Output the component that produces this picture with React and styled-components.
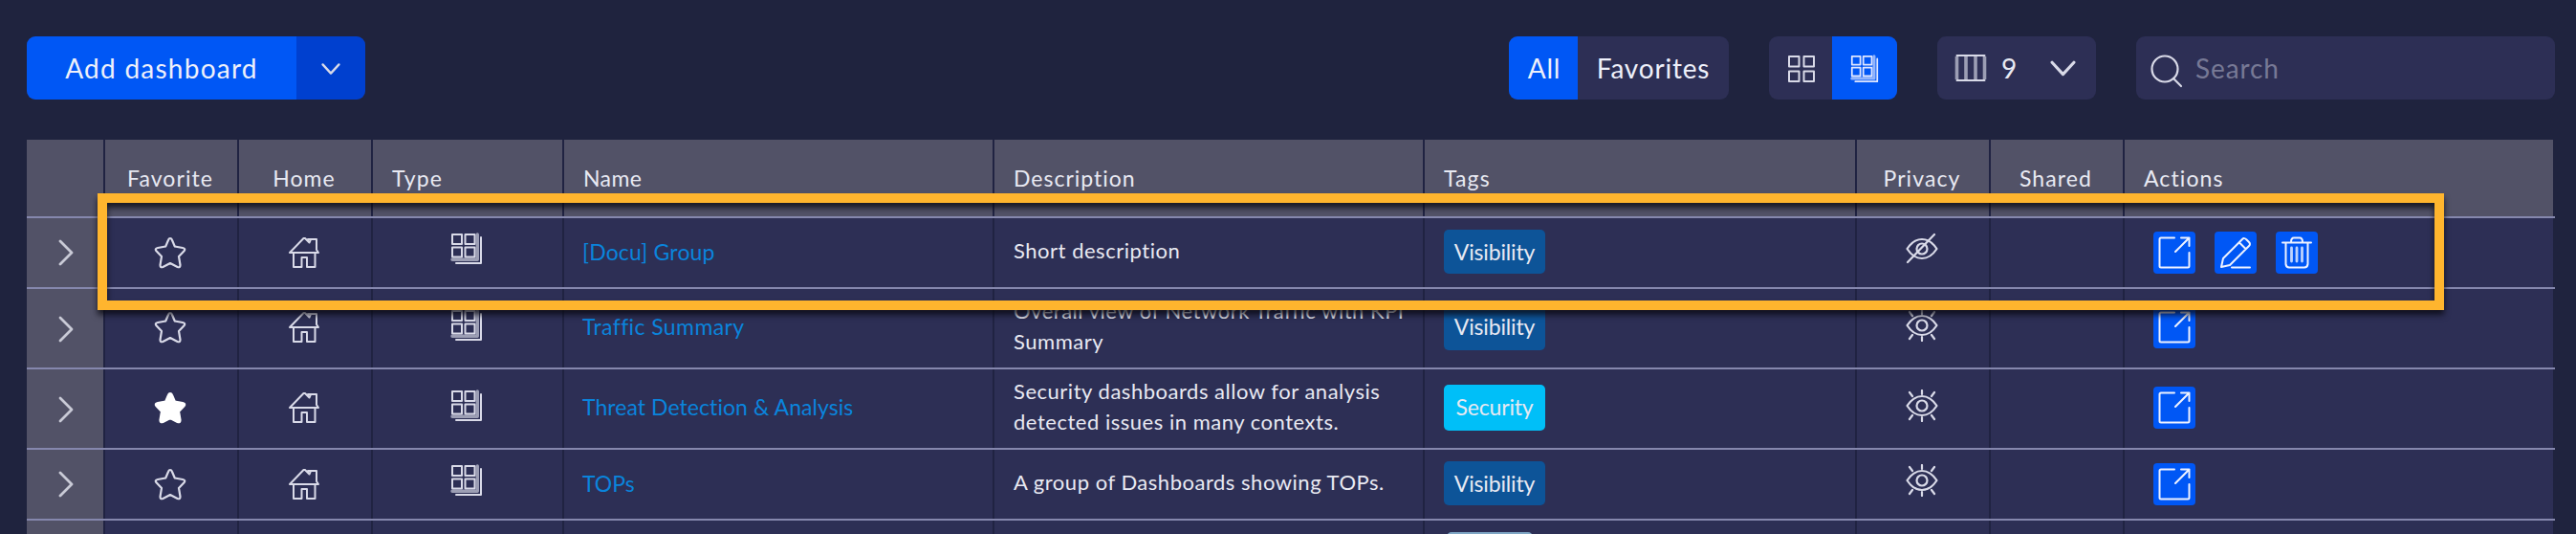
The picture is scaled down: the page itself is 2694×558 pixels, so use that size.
import React from "react";
import styled, { createGlobalStyle } from "styled-components";

const Global = createGlobalStyle`
  * { box-sizing: border-box; }
  html, body { margin: 0; background: #1f233e; }
  body { height: 558px; overflow: hidden; font-family: Lato, "Liberation Sans", sans-serif; color: #e8e9f2; }
`;

const Page = styled.div`
  position: relative;
  width: 2694px;
  height: 558px;
  overflow: hidden;
  padding: 38px 22px 0 28px;
`;
const Toolbar = styled.div`
  display: flex;
  height: 66px;
  margin-bottom: 42px;
`;
const Group = styled.div`
  display: flex;
  height: 66px;
  width: ${(p) => p.$w}px;
  margin-left: ${(p) => p.$gap || 0}px;
  background: #2d2f55;
  border-radius: 9px;
  overflow: hidden;
`;
const Segment = styled.button`
  display: flex;
  align-items: center;
  justify-content: center;
  width: ${(p) => p.$w}px;
  height: 66px;
  padding: ${(p) => p.$top || 0}px 0 0 ${(p) => p.$left || 0}px;
  border: 0;
  font: inherit;
  font-size: 28px;
  line-height: 34px;
  letter-spacing: ${(p) => p.$ls || 0}px;
  color: #eef0fa;
  background: ${(p) => p.$bg || "transparent"};
`;
const ColumnCount = styled.span`
  width: 20px;
  margin: 0 31px 0 15px;
  font-size: 28px;
`;
const Columns = styled(Group)`
  align-items: center;
  padding-left: 18px;
`;
const Search = styled(Group)`
  align-items: center;
  gap: 12px;
  padding-left: 14px;
  font-size: 28px;
  letter-spacing: 0.9px;
  color: #777995;
`;
const Table = styled.div`
  width: 2644px;
`;
const Row = styled.div`
  display: grid;
  grid-template-columns: 82px 140px 140px 200px 450px 450px 452px 140px 140px 450px;
  height: ${(p) => p.$h}px;
  border-bottom: 2px solid #8587ad;
`;
const Cell = styled.div`
  display: flex;
  align-items: center;
  justify-content: ${(p) => (p.$center ? "center" : "flex-start")};
  margin-right: ${(p) => (p.$last ? "2px" : 0)};
  padding: 0 ${(p) => (p.$center && !p.$side ? 2 : 0)}px ${(p) => (p.$tall ? 2 : 0)}px ${(p) => (p.$center ? 0 : p.$pad || 20)}px;
  border-right: ${(p) => (p.$last ? 0 : "2px solid #202342")};
  background: #2d2f55;
  font-size: 23px;
  line-height: 32px;
  white-space: nowrap;
`;
const SideCell = styled(Cell)`
  padding: ${(p) => (p.$tall ? 2 : 0)}px 0 0 2px;
  background: #525267;
`;
const HeadCell = styled(Cell)`
  background: #525267;
  letter-spacing: ${(p) => (p.$ls === undefined ? 1.1 : p.$ls)}px;
`;
const Link = styled.a`
  margin-left: -1px;
  padding-bottom: 2px;
  color: #0a84dc;
  letter-spacing: ${(p) => p.$ls || 0}px;
`;
const Description = styled.div`
  white-space: pre;
  font-size: 22px;
  letter-spacing: 0.52px;
  padding-bottom: ${(p) => (p.$tall ? 2 : 4)}px;
`;
const Tag = styled.span`
  display: flex;
  align-items: center;
  justify-content: center;
  width: 106px;
  height: ${(p) => (p.$tall ? 48 : 46)}px;
  margin-bottom: ${(p) => (p.$tall ? 0 : 2)}px;
  padding-bottom: ${(p) => (p.$tall ? 2 : 0)}px;
  border-radius: 5px;
  font-size: 23px;
  letter-spacing: -0.15px;
  background: ${(p) => p.$bg};
`;
const PartialTag = styled.span`
  align-self: flex-start;
  width: 90px;
  height: 46px;
  margin: 12px 0 0 3px;
  border-radius: 5px;
  background: #7fa6c4;
`;
const Action = styled.button`
  display: flex;
  align-items: center;
  justify-content: center;
  width: 44px;
  height: 44px;
  padding: 0;
  margin-right: 20px;
  border: 0;
  border-radius: 4px;
  background: #0057f5;
`;
const Highlight = styled.div`
  position: absolute;
  left: 102px;
  top: 202px;
  width: 2454px;
  height: 122px;
  border: 10px solid #ffb52e;
  filter: drop-shadow(0 5px 3px rgba(8, 8, 16, 0.8));
`;
const Glyph = styled.svg`
  display: block;
  flex: none;
  fill: none;
  stroke: ${(p) => p.$c || "#d9dae8"};
  stroke-width: ${(p) => p.$sw || 2};
  stroke-linecap: round;
  stroke-linejoin: round;
  margin-top: ${(p) => p.$drop || 0}px;
  margin-bottom: ${(p) => p.$lift || 0}px;
`;

const Star = ({ filled }) => (
  <Glyph width="34" height="34" viewBox="0 0 34 34" $sw={2.2} $c={filled ? "#fff" : undefined}>
    <path
      fill={filled ? "#fff" : "none"}
      d="M17 2Q18.200 2 18.800 3.500L21.800 10.500L30 12Q33.500 12.800 31.500 15.300L26 21L27.500 30Q27.500 33 24.600 32L17 28L9.400 32Q6.500 33 6.500 30L8 21L2.500 15.300Q0.500 12.800 4 12L12.200 10.500L15.200 3.500Q15.800 2 17 2Z"
    />
  </Glyph>
);
const Home = () => (
  <Glyph width="34" height="34" viewBox="0 0 34 34">
    <path d="M2 17L16.500 2H18L21.500 5.500M2 17H32L30 14V3H21V5L22.500 6.500L24 3M6 17V32H14.500V22H20V32H28.500V17" />
  </Glyph>
);
const Stack = ({ lift, color, size = 34 }) => (
  <Glyph width={size} height={size} viewBox="0 0 34 34" $lift={lift} $c={color}>
    <path d="M2 2H12V12H2Z M15.500 2H25.500V12H15.500Z M2 15.500H12V25.500H2Z M15.500 15.500H25.500V25.500H15.500Z" />
    <path d="M28.300 2V28.300H2" strokeWidth="3.400" strokeOpacity="0.650" />
    <path d="M32 5V32H6" />
  </Glyph>
);
const Grid = () => (
  <Glyph width="30" height="30" viewBox="0 0 30 30">
    <path d="M2 2H12.500V12.500H2Z M17.500 2H28V12.500H17.500Z M2 17.500H12.500V28H2Z M17.500 17.500H28V28H17.500Z" />
  </Glyph>
);
const ColumnsIcon = () => (
  <Glyph width="34" height="30" viewBox="0 0 34 30">
    <path d="M2.500 3V27 M12 3V27 M22 3V27 M31.500 3V27" strokeWidth="3.600" strokeOpacity="0.650" strokeLinecap="butt" />
    <path d="M2.500 2H31.500 M2.500 28H31.500" />
  </Glyph>
);
const ChevronDown = ({ w = 27 }) => (
  <Glyph width={w} height={w * 0.7} viewBox="0 0 26 18" $sw={3} $drop={1}>
    <path d="M2 3L13 15L24 3" />
  </Glyph>
);
const ChevronRight = () => (
  <Glyph width="18" height="28" viewBox="0 0 18 28" $sw={2.8} $c="#c9cad6">
    <path d="M3 2L15 14L3 26" />
  </Glyph>
);
const Magnifier = () => (
  <Glyph width="36" height="36" viewBox="0 0 36 36" $drop={6} $sw={2.2}>
    <circle cx="16" cy="16" r="13.500" />
    <path d="M25 26L33 34" />
  </Glyph>
);
const Eye = ({ off, lift }) => (
  <Glyph width="34" height="34" viewBox="0 0 34 34" $lift={lift} $sw={2.2}>
    <path d="M1.500 17Q8 7 17 7Q26 7 32.500 17Q26 27 17 27Q8 27 1.500 17Z" />
    <circle cx="17" cy="17" r="5.500" />
    <path d={off ? "M30 2L2 31" : "M17 1V5 M4 3L7 7 M30 3L27 7 M17 29V33 M4 31L7 27 M30 31L27 27"} />
  </Glyph>
);
const OpenIcon = () => (
  <Glyph width="34" height="34" viewBox="0 0 34 34" $c="#eef2ff">
    <path d="M17 1.500H3Q1.500 1.500 1.500 3V31Q1.500 32.500 3 32.500H31Q32.500 32.500 32.500 31V17 M18 16L32.500 1.500 M24 1.500H32.500V10" />
  </Glyph>
);
const PencilIcon = () => (
  <Glyph width="34" height="34" viewBox="0 0 34 34" $c="#eef2ff">
    <path d="M2 32L4 23L24 3Q26 1 28.500 3.500L31 6Q33 8 31 10L11 30Z M21 6.500L27.500 13 M13 32.500H32" />
  </Glyph>
);
const TrashIcon = () => (
  <Glyph width="34" height="34" viewBox="0 0 34 34" $c="#eef2ff">
    <path d="M2 6.500H32 M11 6Q11 1.500 14 1.500H20Q23 1.500 23 6 M5.500 7V29Q6 32.500 9 32.500H25Q28 32.500 28.500 29V7" />
    <path d="M11.500 12V26 M17 12V26 M22.500 12V26" strokeWidth="2.800" strokeOpacity="0.800" />
  </Glyph>
);

const columns = [
  { label: "" },
  { label: "Favorite", center: true },
  { label: "Home", center: true },
  { label: "Type" },
  { label: "Name", ls: 0.4 },
  { label: "Description", ls: 1 },
  { label: "Tags" },
  { label: "Privacy", center: true },
  { label: "Shared", center: true },
  { label: "Actions", last: true },
];

const tagColors = { Visibility: "#0d5498", Security: "#00bff8" };

const rows = [
  { name: "[Docu] Group", ls: 0.15, text: "Short description", tag: "Visibility", hidden: true, edit: true },
  { name: "Traffic Summary", ls: 0.4, text: "Overall view of Network Traffic with KPI\nSummary", tag: "Visibility", tall: true },
  { name: "Threat Detection & Analysis", ls: 0.06, text: "Security dashboards allow for analysis\ndetected issues in many contexts.", tag: "Security", fav: true, tall: true },
  { name: "TOPs", text: "A group of Dashboards showing TOPs.", tag: "Visibility" },
];

const DashboardRow = ({ r }) => {
  const tall = r.tall;
  const lift = tall ? 4 : 8;
  return (
    <Row $h={tall ? 84 : 74}>
      <SideCell $center $side $tall={tall}><ChevronRight /></SideCell>
      <Cell $center $tall={tall}><Star filled={r.fav} /></Cell>
      <Cell $center $tall={tall}><Home /></Cell>
      <Cell $center $tall={tall}><Stack lift={lift} /></Cell>
      <Cell $tall={tall}><Link $ls={r.ls}>{r.name}</Link></Cell>
      <Cell $tall={tall}><Description $tall={tall}>{r.text}</Description></Cell>
      <Cell $tall={tall}><Tag $tall={tall} $bg={tagColors[r.tag]}>{r.tag}</Tag></Cell>
      <Cell $center $tall={tall}><Eye off={r.hidden} lift={lift} /></Cell>
      <Cell />
      <Cell $last $pad={30} $tall={tall}>
        <Action><OpenIcon /></Action>
        {r.edit && <Action><PencilIcon /></Action>}
        {r.edit && <Action><TrashIcon /></Action>}
      </Cell>
    </Row>
  );
};

export default function App() {
  return (
    <Page>
      <Global />
      <Toolbar>
        <Group $w={354}>
          <Segment $w={282} $bg="#0057f5" $ls={1.25}>Add dashboard</Segment>
          <Segment $w={72} $bg="#0040cf"><ChevronDown w={20} /></Segment>
        </Group>
        <Group $w={230} $gap={1196}>
          <Segment $w={72} $left={2} $bg="#0057f5" $ls={0.8}>All</Segment>
          <Segment $w={158} $ls={0.8}>Favorites</Segment>
        </Group>
        <Group $w={134} $gap={42}>
          <Segment $w={66} $left={2} $top={2}><Grid /></Segment>
          <Segment $w={68} $top={2} $bg="#0057f5"><Stack size={30} color="#dfe6ff" /></Segment>
        </Group>
        <Columns $w={166} $gap={42}>
          <ColumnsIcon />
          <ColumnCount>9</ColumnCount>
          <ChevronDown />
        </Columns>
        <Search $w={438} $gap={42}><Magnifier />Search</Search>
      </Toolbar>
      <Table>
        <Row $h={82}>
          {columns.map((c, i) => (
            <HeadCell key={i} $center={c.center} $last={c.last} $ls={c.ls}>{c.label}</HeadCell>
          ))}
        </Row>
        {rows.map((r) => <DashboardRow key={r.name} r={r} />)}
        <Row $h={74}>
          <SideCell />
          <Cell /><Cell /><Cell /><Cell /><Cell />
          <Cell><PartialTag /></Cell>
          <Cell /><Cell />
          <Cell $last />
        </Row>
      </Table>
      <Highlight />
    </Page>
  );
}
